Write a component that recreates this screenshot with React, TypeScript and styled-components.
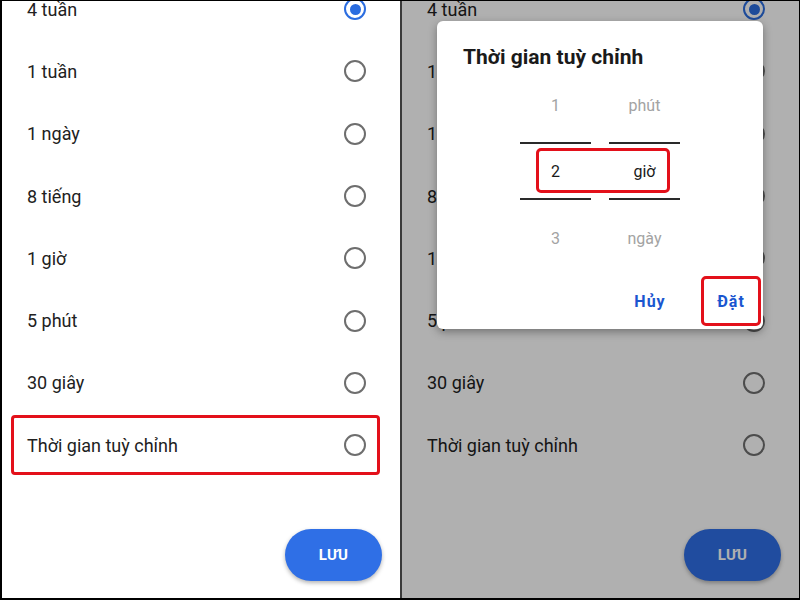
import styled, { createGlobalStyle } from 'styled-components';

const GlobalStyle = createGlobalStyle`
  html, body {
    margin: 0;
    padding: 0;
    background: #fff;
    font-family: Roboto, "Noto Sans", "Liberation Sans", sans-serif;
  }
  * {
    box-sizing: border-box;
  }
`;

const Frame = styled.div`
  display: flex;
  width: 800px;
  height: 600px;
  border: 1px solid #000;
  border-left-width: 2px;
  border-bottom-width: 2px;
  overflow: hidden;
`;

const Panel = styled.div<{ $divider?: boolean }>`
  position: relative;
  display: flex;
  flex-direction: column;
  flex: ${({ $divider }) => ($divider ? '1' : '0 0 398px')};
  height: 100%;
  background: #fff;
  border-left: ${({ $divider }) => ($divider ? '2px solid #3a3a3a' : 'none')};
  overflow: hidden;
`;

const List = styled.div`
  display: flex;
  flex-direction: column;
  margin-top: -23px;
`;

const Row = styled.div<{ $highlight?: boolean }>`
  position: relative;
  display: flex;
  align-items: center;
  justify-content: space-between;
  height: 62.3px;
  flex-shrink: 0;
  padding: 0 34px 0 25px;
  font-size: 18px;
  color: #212121;

  &::after {
    content: '';
    display: ${({ $highlight }) => ($highlight ? 'block' : 'none')};
    position: absolute;
    top: 1px;
    bottom: 1px;
    left: 9px;
    right: 20px;
    border: 3px solid #e3101a;
    border-radius: 4px;
  }
`;

const Radio = styled.span<{ $checked?: boolean }>`
  display: flex;
  align-items: center;
  justify-content: center;
  width: 22px;
  height: 22px;
  border-radius: 50%;
  border: 2px solid ${({ $checked }) => ($checked ? '#2b6de0' : '#6e6e6e')};

  &::before {
    content: '';
    display: ${({ $checked }) => ($checked ? 'block' : 'none')};
    width: 11px;
    height: 11px;
    border-radius: 50%;
    background: #2b6de0;
  }
`;

const Footer = styled.div`
  display: flex;
  justify-content: flex-end;
  margin-top: auto;
  padding: 0 18px 17px 0;
`;

const SaveButton = styled.button`
  width: 97px;
  height: 52px;
  border: none;
  border-radius: 26px;
  background: #2f6fe6;
  color: #fff;
  font-family: Roboto, "Liberation Sans", sans-serif;
  font-size: 15px;
  font-weight: 700;
  letter-spacing: 0.3px;
  box-shadow: 0 2px 4px rgba(0, 0, 0, 0.3);
`;

const Dim = styled.div`
  position: absolute;
  inset: 0;
  background: rgba(0, 0, 0, 0.31);
`;

const Dialog = styled.div`
  position: absolute;
  left: 35px;
  top: 20px;
  width: 326px;
  height: 308px;
  display: flex;
  flex-direction: column;
  padding: 24px 0 3px;
  background: #fff;
  border-radius: 6px;
  box-shadow: 0 3px 8px rgba(0, 0, 0, 0.35);
`;

const DialogTitle = styled.h2`
  margin: 0;
  padding-left: 26px;
  font-size: 21px;
  line-height: 24px;
  font-weight: 700;
  color: #1a1a1a;
`;

const Picker = styled.div`
  position: relative;
  display: flex;
  justify-content: center;
  gap: 18px;
  margin-top: 16px;
`;

const PickerColumn = styled.div`
  display: flex;
  flex-direction: column;
  width: 71px;
`;

const PickerItem = styled.div<{ $active?: boolean }>`
  display: flex;
  align-items: center;
  justify-content: center;
  height: ${({ $active }) => ($active ? '54px' : '40px')};
  font-size: 16px;
  color: ${({ $active }) => ($active ? '#1a1a1a' : '#a3a3a3')};
`;

const PickerLine = styled.div<{ $top?: boolean }>`
  height: 2px;
  background: #2a2a2a;
  margin-top: ${({ $top }) => ($top ? '17px' : '0')};
  margin-bottom: ${({ $top }) => ($top ? '0' : '18px')};
`;

const PickerMark = styled.div`
  position: absolute;
  left: 99px;
  top: 63px;
  width: 134px;
  height: 45px;
  border: 3px solid #e3101a;
  border-radius: 5px;
`;

const Actions = styled.div`
  display: flex;
  justify-content: flex-end;
  gap: 17px;
  margin-top: auto;
`;

const TextButton = styled.button<{ $highlight?: boolean }>`
  position: relative;
  width: 64px;
  height: 50px;
  border: none;
  background: transparent;
  color: #1a56d0;
  font-family: Roboto, "Liberation Sans", sans-serif;
  font-size: 16px;
  font-weight: 700;
  letter-spacing: 1px;

  &::after {
    content: '';
    display: ${({ $highlight }) => ($highlight ? 'block' : 'none')};
    position: absolute;
    inset: 0 2px;
    border: 3px solid #e3101a;
    border-radius: 5px;
  }
`;

const options = ['4 tuần', '1 tuần', '1 ngày', '8 tiếng', '1 giờ', '5 phút', '30 giây', 'Thời gian tuỳ chỉnh'];

const Screen = ({ markCustom }: { markCustom?: boolean }) => (
  <>
    <List>
      {options.map((label, i) => (
        <Row key={label} $highlight={markCustom && i === options.length - 1}>
          <span>{label}</span>
          <Radio $checked={i === 0} />
        </Row>
      ))}
    </List>
    <Footer>
      <SaveButton>LƯU</SaveButton>
    </Footer>
  </>
);

const picker = [
  ['1', '2', '3'],
  ['phút', 'giờ', 'ngày'],
];

export default function App() {
  return (
    <>
      <GlobalStyle />
      <Frame>
        <Panel>
          <Screen markCustom />
        </Panel>
        <Panel $divider>
          <Screen />
          <Dim />
          <Dialog>
            <DialogTitle>Thời gian tuỳ chỉnh</DialogTitle>
            <Picker>
              {picker.map((col, c) => (
                <PickerColumn key={c}>
                  <PickerItem>{col[0]}</PickerItem>
                  <PickerLine $top />
                  <PickerItem $active>{col[1]}</PickerItem>
                  <PickerLine />
                  <PickerItem>{col[2]}</PickerItem>
                </PickerColumn>
              ))}
              <PickerMark />
            </Picker>
            <Actions>
              <TextButton>Hủy</TextButton>
              <TextButton $highlight>Đặt</TextButton>
            </Actions>
          </Dialog>
        </Panel>
      </Frame>
    </>
  );
}
